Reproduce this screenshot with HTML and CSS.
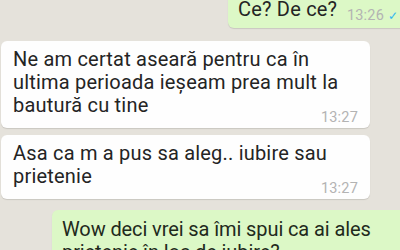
FILE: index.html
```html
<!DOCTYPE html>
<html>
<head>
    <title>Chat</title>
    <meta name="viewport" content="width=device-width, initial-scale=1">
    <link rel="stylesheet" href="styles.css">
</head>
<body>
    <div class="chat">
        <div class="msg msg_out msg_short">
            <span class="text">Ce? De ce?</span>
            <span class="time">13:26 <span class="tick">&#10003;</span></span>
        </div>
        <div class="msg msg_in">
            <p class="text">Ne am certat aseară pentru ca în ultima perioada ieșeam prea mult la bautură cu tine</p>
            <span class="time">13:27</span>
        </div>
        <div class="msg msg_in msg_next">
            <p class="text">Asa ca m a pus sa aleg.. iubire sau prietenie</p>
            <span class="time">13:27</span>
        </div>
        <div class="msg msg_out msg_long">
            <p class="text">Wow deci vrei sa îmi spui ca ai ales prietenie în loc de iubire?</p>
        </div>
    </div>
</body>
</html>
```

FILE: styles.css
```css
body {
	margin: 0;
	background-color: #e5e2db;
	font-family: Roboto, "Noto Sans", Arial, sans-serif;
	overflow: hidden;
  }
  .chat {
	display: flex;
	flex-direction: column;
	margin-top: -12px;
  }
  .msg {
	border-radius: 6px;
	box-shadow: 0 1px 1px rgba(0,0,0,0.12);
	color: #242424;
  }
  .text {
	margin: 0;
	font-size: 20px;
	line-height: 23px;
	letter-spacing: 0.2px;
  }
  .time {
	display: block;
	text-align: right;
	margin-top: -7px;
	font-size: 14.5px;
	line-height: 16px;
	letter-spacing: 0.2px;
	color: #b3b3b3;
  }
  .msg_in {
	background-color: #fefefe;
	width: 333px;
	margin-left: 1px;
	margin-top: 13px;
	padding: 7px 24px 2px 12px;
  }
  .msg_in .time {
	margin-right: -12px;
  }
  .msg_next {
	margin-top: 7px;
  }
  .msg_out {
	background-color: #dcf8c6;
	align-self: flex-end;
	margin-right: -8px;
  }
  .msg_short {
	display: flex;
	align-items: flex-end;
	padding: 10px 10px 7px 10px;
	width: 160px;
  }
  .msg_short .text {
	flex: 1;
  }
  .msg_short .time {
	margin-top: 0;
	margin-bottom: -3px;
  }
  .tick {
	color: #34b7f1;
	font-size: 12px;
  }
  .msg_long {
	margin-top: 11px;
	width: 330px;
	padding: 8px 16px 6px 10px;
  }
  .msg_long .text {
	letter-spacing: -0.1px;
	color: #1f2a1c;
  }
```
